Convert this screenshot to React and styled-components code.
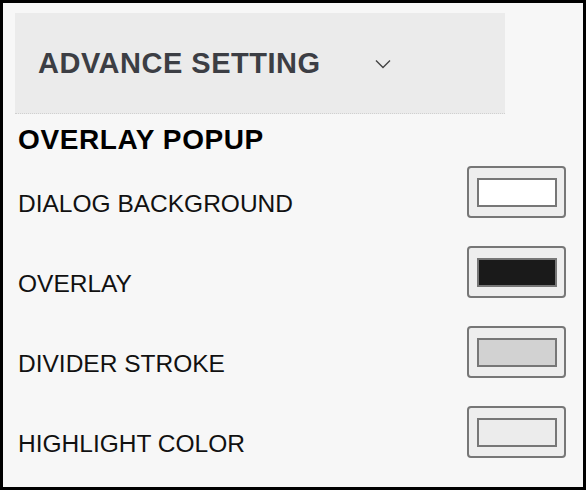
import React from 'react';
import styled, { createGlobalStyle } from 'styled-components';

const Global = createGlobalStyle`
  html, body {
    margin: 0;
    padding: 0;
    background: #f7f7f7;
  }
  * {
    box-sizing: border-box;
  }
`;

const Frame = styled.div`
  width: 586px;
  height: 490px;
  border: 3px solid #000;
  background: #f7f7f7;
  padding: 10px 0 0 12px;
  font-family: "Liberation Sans", Arial, sans-serif;
`;

const Header = styled.div`
  width: 490px;
  height: 101px;
  background: #ebebeb;
  border-bottom: 1px dotted #d0d0d0;
  display: flex;
  align-items: center;
  padding-left: 23px;
`;

const HeaderTitle = styled.h2`
  margin: 0;
  font-size: 29px;
  font-weight: 700;
  color: #3c3e44;
  letter-spacing: 0.5px;
`;

const Chevron = styled.svg`
  margin-left: 55px;
  margin-top: 2px;
`;

const Section = styled.div`
  padding: 12px 17px 0 3px;
`;

const SectionTitle = styled.h3`
  margin: 0 0 -2px;
  font-size: 28px;
  font-weight: 700;
  color: #000;
  line-height: 28px;
  letter-spacing: 0.6px;
`;

const Row = styled.div`
  display: flex;
  align-items: center;
  justify-content: space-between;
  height: 80px;
`;

const Label = styled.span`
  font-size: 24.5px;
  color: #111;
  margin-top: 24px;
`;

const Swatch = styled.div`
  width: 99px;
  height: 52px;
  border: 2px solid #777;
  border-radius: 4px;
  background: #eeeeee;
  display: flex;
  align-items: center;
  justify-content: center;
`;

const Fill = styled.div`
  width: 80px;
  height: 29px;
  border: 2px solid #777;
  background: ${p => p.color};
`;

const settings = [
  { label: 'DIALOG BACKGROUND', color: '#ffffff' },
  { label: 'OVERLAY', color: '#1a1a1a' },
  { label: 'DIVIDER STROKE', color: '#d2d2d2' },
  { label: 'HIGHLIGHT COLOR', color: '#ececec' },
];

export default function App() {
  return (
    <>
      <Global />
      <Frame>
        <Header>
          <HeaderTitle>ADVANCE SETTING</HeaderTitle>
          <Chevron width="16" height="10" viewBox="0 0 16 10">
            <path d="M1 1.5 L8 8.5 L15 1.5" fill="none" stroke="#444" strokeWidth="1.4" />
          </Chevron>
        </Header>
        <Section>
          <SectionTitle>OVERLAY POPUP</SectionTitle>
          {settings.map(s => (
            <Row key={s.label}>
              <Label>{s.label}</Label>
              <Swatch>
                <Fill color={s.color} />
              </Swatch>
            </Row>
          ))}
        </Section>
      </Frame>
    </>
  );
}
